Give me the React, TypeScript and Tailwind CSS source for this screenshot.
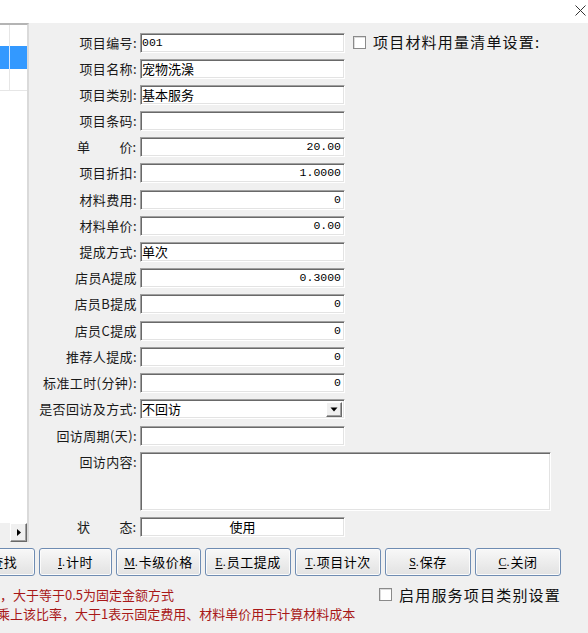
import React from "react";

type Row = {
  label: string;
  value: string;
  h: number;
  align?: "left" | "right" | "center";
  mono?: boolean;
  spaced?: boolean;
  select?: boolean;
};

const rows: Row[] = [
  { label: "项目编号:", value: "001", h: 26, mono: true },
  { label: "项目名称:", value: "宠物洗澡", h: 26 },
  { label: "项目类别:", value: "基本服务", h: 26 },
  { label: "项目条码:", value: "", h: 26 },
  { label: "单|价:", value: "20.00", h: 26, align: "right", mono: true, spaced: true },
  { label: "项目折扣:", value: "1.0000", h: 27, align: "right", mono: true },
  { label: "材料费用:", value: "0", h: 26, align: "right", mono: true },
  { label: "材料单价:", value: "0.00", h: 26, align: "right", mono: true },
  { label: "提成方式:", value: "单次", h: 26 },
  { label: "店员A提成", value: "0.3000", h: 26, align: "right", mono: true },
  { label: "店员B提成", value: "0", h: 27, align: "right", mono: true },
  { label: "店员C提成", value: "0", h: 26, align: "right", mono: true },
  { label: "推荐人提成:", value: "0", h: 26, align: "right", mono: true },
  { label: "标准工时(分钟):", value: "0", h: 26, align: "right", mono: true },
  { label: "是否回访及方式:", value: "不回访", h: 27, select: true },
  { label: "回访周期(天):", value: "", h: 26 },
];

const sunken =
  "border border-t-[#a0a0a0] border-l-[#a0a0a0] border-b-white border-r-white shadow-[inset_1px_1px_0_#696969,inset_-1px_-1px_0_#e3e3e3] bg-white";

function Label({ text, spaced }: { text: string; spaced?: boolean }) {
  if (spaced) {
    const [a, b] = text.split("|");
    return (
      <div className="w-[108px] flex justify-end leading-[20px] pr-[1px]">
        <span className="w-[59px] flex justify-between">
          <span>{a}</span>
          <span>{b}</span>
        </span>
      </div>
    );
  }
  return <div className="w-[108px] text-right leading-[20px] whitespace-nowrap tracking-[0.4px]">{text}</div>;
}

function Field({ row }: { row: Row }) {
  const alignCls =
    row.align === "right" ? "justify-end pr-[3px]" : row.align === "center" ? "justify-center" : "justify-start pl-[1px]";
  const fontCls = row.mono ? "font-['Liberation_Mono',monospace] text-[11.5px]" : "text-[13px]";
  return (
    <div className={`w-[205px] h-[20px] flex items-center ${sunken} ${alignCls} relative`}>
      <span className={`${fontCls} leading-[18px] text-black`}>{row.value}</span>
      {row.select && (
        <div className="absolute right-[2px] top-[2px] w-[16px] h-[15px] bg-[#f0f0f0] border border-t-white border-l-white border-b-[#696969] border-r-[#696969] shadow-[inset_-1px_-1px_0_#a0a0a0] flex items-center justify-center">
          <svg width="8" height="5" viewBox="0 0 8 5">
            <polygon points="0.5,0.5 7.5,0.5 4,4.5" fill="#000" />
          </svg>
        </div>
      )}
    </div>
  );
}

function Checkbox() {
  return <div className="w-[13px] h-[13px] bg-white border border-[#8a8a8a] shadow-[inset_1px_1px_0_#dcdcdc]" />;
}

function Btn({ k, text, w }: { k: string; text: string; w: number }) {
  return (
    <div
      style={{ width: w }}
      className="h-[28px] shrink-0 rounded-[3px] border border-[#6f8cb2] bg-gradient-to-b from-[#f8f8f8] to-[#e2e2e2] shadow-[inset_0_0_0_1px_#fbfbfb] flex items-center justify-center text-[13px] text-black"
    >
      <span className="font-['Liberation_Serif',serif] text-[12px] underline underline-offset-2">{k}</span>
      <span className="font-['Liberation_Serif',serif] text-[12px] mr-[1px]">.</span>
      <span className="tracking-[0.5px]">{text}</span>
    </div>
  );
}

export default function App() {
  return (
    <div className="w-[588px] h-[633px] bg-[#f0f0f0] overflow-hidden font-['Noto_Sans_CJK_SC','Liberation_Sans',sans-serif] text-[13px] text-[#1a1a1a]">
      {/* title strip */}
      <div className="h-[23px] bg-white flex justify-end items-start pr-[2px] pt-[5px]">
        <svg width="11" height="11" viewBox="0 0 11 11">
          <path d="M0.5 0.5 L10.5 10.5 M10.5 0.5 L0.5 10.5" stroke="#333" strokeWidth="1" />
        </svg>
      </div>

      <div className="flex h-[525px]">
        {/* item list */}
        <div className="w-[29px] h-[519px] flex flex-col bg-white border-t-2 border-t-[#b4b4b4] border-r-2 border-r-[#dadada]">
          <div className="flex h-[21px]">
            <div className="w-[10px] border-r border-[#e6e6e6]" />
            <div className="flex-1" />
          </div>
          <div className="flex h-[23px] bg-[#3399ff]">
            <div className="w-[10px] border-r border-[#d8e9ff]" />
            <div className="flex-1" />
          </div>
          <div className="flex h-[22px] border-b border-[#e6e6e6]">
            <div className="w-[10px] border-r border-[#e6e6e6]" />
            <div className="flex-1" />
          </div>
          <div className="flex-1" />
          <div className="h-[19px] bg-[#f0f0f0] flex justify-end">
            <div className="w-[17px] h-[19px] bg-[#f0f0f0] border border-t-white border-l-white border-b-[#696969] border-r-[#696969] shadow-[inset_-1px_-1px_0_#a0a0a0] flex items-center justify-center">
              <svg width="4" height="7" viewBox="0 0 4 7">
                <polygon points="0,0 4,3.5 0,7" fill="#000" />
              </svg>
            </div>
          </div>
        </div>

        {/* form */}
        <div className="flex-1 pt-[10px]">
          {rows.map((r, i) => (
            <div key={i} style={{ height: r.h }} className="flex items-start">
              <Label text={r.label} spaced={r.spaced} />
              <div className="w-[3px]" />
              <Field row={r} />
              {i === 0 && (
                <div className="ml-[8px] flex items-center gap-[7px] -mt-[1px]">
                  <Checkbox />
                  <span className="text-[15px] tracking-[1.2px] leading-[20px] text-[#111]">项目材料用量清单设置:</span>
                </div>
              )}
            </div>
          ))}
          <div className="h-[65px] flex items-start">
            <Label text="回访内容:" />
            <div className="w-[3px]" />
            <div className={`w-[411px] h-[59px] ${sunken}`} />
          </div>
          <div className="flex items-start">
            <Label text="状|态:" spaced />
            <div className="w-[3px]" />
            <Field row={{ label: "", value: "使用", h: 20, align: "center" }} />
          </div>
        </div>
      </div>

      {/* action buttons */}
      <div className="flex gap-[4px] ml-[-38px]">
        <Btn k="F" text="查找" w={73} />
        <Btn k="I" text="计时" w={73} />
        <Btn k="M" text="卡级价格" w={85} />
        <Btn k="E" text="员工提成" w={86} />
        <Btn k="T" text="项目计次" w={86} />
        <Btn k="S" text="保存" w={86} />
        <Btn k="C" text="关闭" w={86} />
      </div>

      {/* notes */}
      <div className="flex pt-[9px]">
        <div className="w-[379px] text-[13px] leading-[19px] text-[#a81818] whitespace-nowrap">
          <div>，大于等于0.5为固定金额方式</div>
          <div className="-ml-[3px]">乘上该比率，大于1表示固定费用、材料单价用于计算材料成本</div>
        </div>
        <div className="flex items-center gap-[7px] h-[19px]">
          <Checkbox />
          <span className="text-[15px] tracking-[1.2px] leading-[20px] text-[#111]">启用服务项目类别设置</span>
        </div>
      </div>
    </div>
  );
}
